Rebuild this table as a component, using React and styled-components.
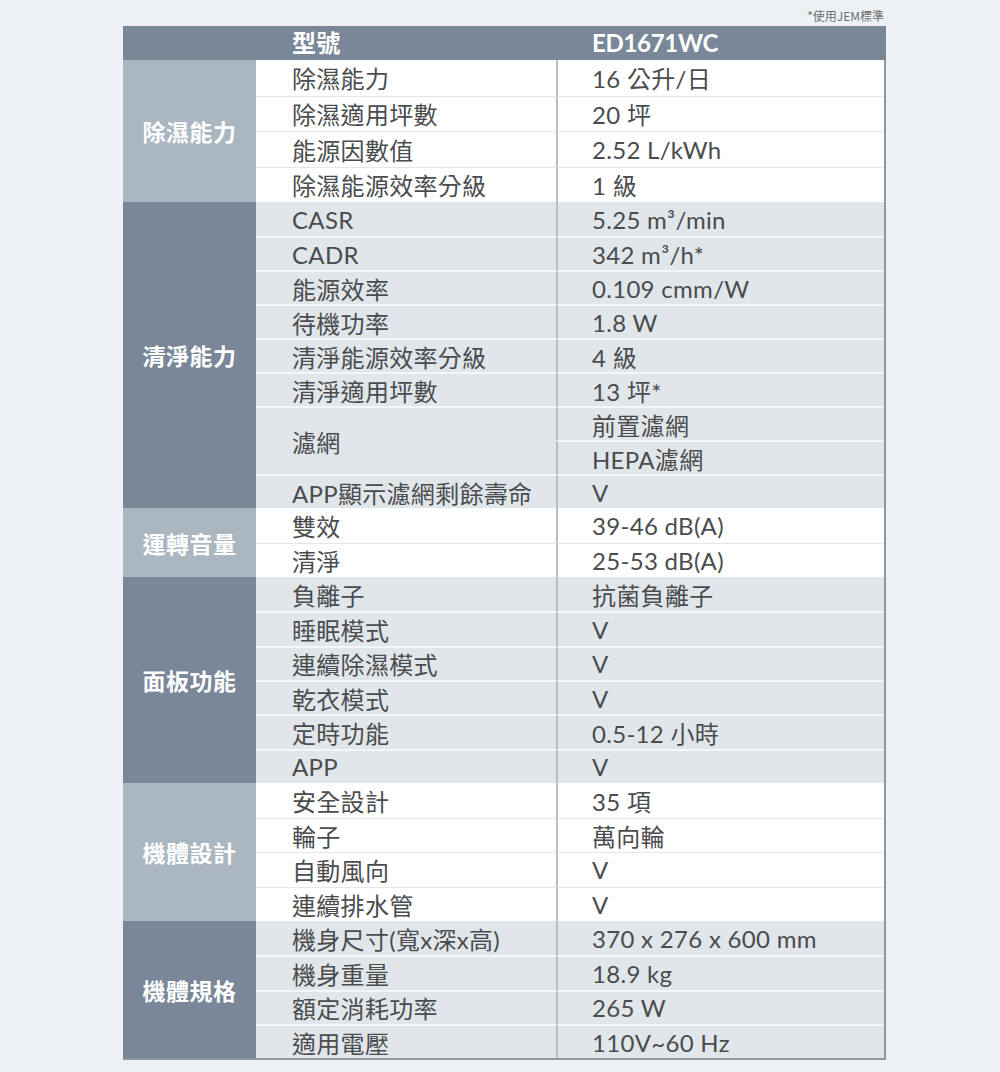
import React from "react";
import styled, { createGlobalStyle } from "styled-components";

const Global = createGlobalStyle`
  html, body { margin: 0; padding: 0; background: #eef1f3; }
  body { font-family: Lato, "Noto Sans CJK TC", sans-serif; }
`;

const Page = styled.div`
  width: 1000px;
  height: 1072px;
  box-sizing: border-box;
  padding: 6px 0 0 123px;
`;

const Note = styled.div`
  width: 763px;
  text-align: right;
  font-size: 12px;
  line-height: 20px;
  color: #6b6f73;
  font-family: "Noto Sans CJK TC", sans-serif;
  padding-right: 2px;
  box-sizing: border-box;
`;

const Table = styled.div`
  width: 763px;
  display: flex;
  flex-direction: column;
`;

const HeaderRow = styled.div`
  display: grid;
  grid-template-columns: 133px 300px 1fr;
  height: 34px;
  background: #7a8799;
  color: #fff;
  font-size: 24px;
  font-weight: 700;
  align-items: center;
`;

const HeaderCell = styled.div`
  padding-left: 36px;
  line-height: 34px;
  letter-spacing: ${(p) => (p.$tight ? "-0.3px" : "0.3px")};
`;

const Body = styled.div`
  display: flex;
  flex-direction: column;
  border-right: 2px solid #8d97a2;
  border-bottom: 2px solid #8d97a2;
`;

const Group = styled.div`
  display: grid;
  grid-template-columns: 133px 300px 1fr;
  grid-auto-rows: ${(p) => p.$rowH}px;
  background: ${(p) => (p.$dark ? "#e1e6ea" : "#ffffff")};
`;

const Category = styled.div`
  grid-column: 1;
  grid-row: 1 / span ${(p) => p.$span};
  background: ${(p) => (p.$dark ? "#7a8799" : "#aab6c0")};
  color: #fff;
  font-weight: 700;
  font-size: 23px;
  display: flex;
  align-items: center;
  justify-content: center;
  font-family: "Noto Sans CJK TC", sans-serif;
  letter-spacing: 0.5px;
`;

const Cell = styled.div`
  display: flex;
  align-items: center;
  padding-left: 36px;
  font-size: 24px;
  color: #4a4c4e;
  letter-spacing: 0.3px;
  border-top: ${(p) =>
    p.$first ? "none" : p.$dark ? "2px solid #f4f6f8" : "1px solid #e3e7ea"};
  box-sizing: border-box;
  white-space: nowrap;
`;

const ItemCell = styled(Cell)`
  grid-column: 2;
`;

const ValueCell = styled(Cell)`
  grid-column: 3;
  border-left: 2px solid #b7bec6;
  padding-left: 34px;
`;

const groups = [
  {
    name: "除濕能力",
    rowH: 35.5,
    rows: [
      ["除濕能力", ["16 公升/日"]],
      ["除濕適用坪數", ["20 坪"]],
      ["能源因數值", ["2.52 L/kWh"]],
      ["除濕能源效率分級", ["1 級"]],
    ],
  },
  {
    name: "清淨能力",
    rowH: 34,
    rows: [
      ["CASR", ["5.25 m³/min"]],
      ["CADR", ["342 m³/h*"]],
      ["能源效率", ["0.109 cmm/W"]],
      ["待機功率", ["1.8 W"]],
      ["清淨能源效率分級", ["4 級"]],
      ["清淨適用坪數", ["13 坪*"]],
      ["濾網", ["前置濾網", "HEPA濾網"]],
      ["APP顯示濾網剩餘壽命", ["V"]],
    ],
  },
  {
    name: "運轉音量",
    rowH: 34.5,
    rows: [
      ["雙效", ["39-46 dB(A)"]],
      ["清淨", ["25-53 dB(A)"]],
    ],
  },
  {
    name: "面板功能",
    rowH: 34.35,
    rows: [
      ["負離子", ["抗菌負離子"]],
      ["睡眠模式", ["V"]],
      ["連續除濕模式", ["V"]],
      ["乾衣模式", ["V"]],
      ["定時功能", ["0.5-12 小時"]],
      ["APP", ["V"]],
    ],
  },
  {
    name: "機體設計",
    rowH: 34.5,
    rows: [
      ["安全設計", ["35 項"]],
      ["輪子", ["萬向輪"]],
      ["自動風向", ["V"]],
      ["連續排水管", ["V"]],
    ],
  },
  {
    name: "機體規格",
    rowH: 34.3,
    rows: [
      ["機身尺寸(寬x深x高)", ["370 x 276 x 600 mm"]],
      ["機身重量", ["18.9 kg"]],
      ["額定消耗功率", ["265 W"]],
      ["適用電壓", ["110V~60 Hz"]],
    ],
  },
];

function SpecGroup({ g, dark }) {
  let r = 1;
  const cells = [];
  let total = 0;
  g.rows.forEach(([item, values], i) => {
    const start = r;
    const span = values.length;
    cells.push(
      <ItemCell
        key={"i" + i}
        $dark={dark}
        $first={i === 0}
        style={{ gridRow: `${start} / span ${span}` }}
      >
        {item}
      </ItemCell>
    );
    values.forEach((v, j) => {
      cells.push(
        <ValueCell
          key={"v" + i + "-" + j}
          $dark={dark}
          $first={i === 0 && j === 0}
          style={{ gridRow: `${start + j}` }}
        >
          {v}
        </ValueCell>
      );
    });
    r += span;
    total += span;
  });
  return (
    <Group $dark={dark} $rowH={g.rowH}>
      <Category $dark={dark} $span={total}>
        {g.name}
      </Category>
      {cells}
    </Group>
  );
}

export default function App() {
  return (
    <Page>
      <Global />
      <Note>*使用JEM標準</Note>
      <Table>
        <HeaderRow>
          <div />
          <HeaderCell>型號</HeaderCell>
          <HeaderCell $tight>ED1671WC</HeaderCell>
        </HeaderRow>
        <Body>
          {groups.map((g, i) => (
            <SpecGroup key={g.name} g={g} dark={i % 2 === 1} />
          ))}
        </Body>
      </Table>
    </Page>
  );
}
